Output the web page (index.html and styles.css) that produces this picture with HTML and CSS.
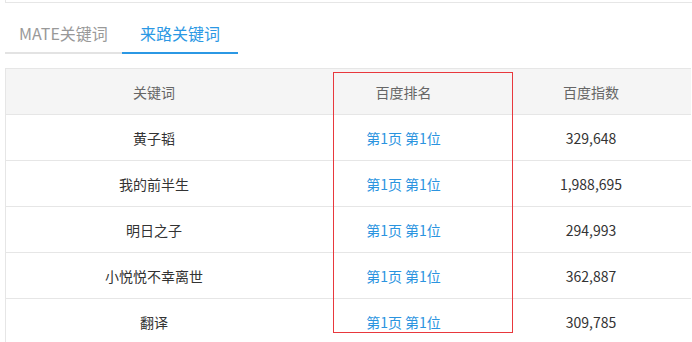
FILE: index.html
```html
<!DOCTYPE html>
<html lang="zh-CN">
<head>
<meta charset="utf-8">
<link rel="stylesheet" href="styles.css">
</head>
<body>
<div class="page">
  <div class="topbox"></div>
  <div class="tabs">
    <div class="tab">MATE关键词</div>
    <div class="tab active">来路关键词</div>
  </div>
  <div class="table">
    <div class="row head">
      <div class="cell">关键词</div>
      <div class="cell">百度排名</div>
      <div class="cell num">百度指数</div>
    </div>
    <div class="row">
      <div class="cell">黄子韬</div>
      <div class="cell link">第1页 第1位</div>
      <div class="cell num">329,648</div>
    </div>
    <div class="row">
      <div class="cell">我的前半生</div>
      <div class="cell link">第1页 第1位</div>
      <div class="cell num">1,988,695</div>
    </div>
    <div class="row">
      <div class="cell">明日之子</div>
      <div class="cell link">第1页 第1位</div>
      <div class="cell num">294,993</div>
    </div>
    <div class="row">
      <div class="cell">小悦悦不幸离世</div>
      <div class="cell link">第1页 第1位</div>
      <div class="cell num">362,887</div>
    </div>
    <div class="row">
      <div class="cell">翻译</div>
      <div class="cell link">第1页 第1位</div>
      <div class="cell num">309,785</div>
    </div>
  </div>
  <div class="highlight"></div>
</div>
</body>
</html>
```

FILE: styles.css
```css
html, body {
  margin: 0;
  padding: 0;
  background: #fff;
}
body {
  font-family: "Noto Sans CJK SC", "Microsoft YaHei", sans-serif;
  width: 692px;
  height: 342px;
  overflow: hidden;
}
.page {
  position: relative;
  height: 342px;
}
.topbox {
  margin-left: 5px;
  height: 2px;
  border-left: 1px solid #e6e6e6;
  border-bottom: 1px solid #e6e6e6;
}
.tabs {
  display: flex;
  margin: 11px 0 0 5px;
}
.tab {
  height: 38px;
  line-height: 38px;
  font-size: 16px;
  color: #999;
  text-align: center;
  border-bottom: 2px solid #e3e3e3;
  width: 117px;
}
.tab.active {
  width: 116px;
  color: #2b98e4;
  border-bottom-color: #2b98e4;
}
.table {
  margin: 14px 0 0 5px;
  width: 686px;
  border-top: 1px solid #e6e6e6;
  border-left: 1px solid #e6e6e6;
  box-sizing: border-box;
}
.row {
  display: grid;
  grid-template-columns: 296px 203px 1fr;
  height: 45px;
  border-bottom: 1px solid #e6e6e6;
  font-size: 14px;
  color: #333;
}
.row.head {
  background: #f5f5f5;
  color: #666;
}
.cell {
  display: flex;
  align-items: center;
  justify-content: center;
}
.cell.num {
  padding-right: 14px;
}
.cell.link {
  color: #2b94df;
}
.highlight {
  position: absolute;
  left: 333px;
  top: 72px;
  width: 178px;
  height: 259px;
  border: 1px solid #e8383d;
}
```
